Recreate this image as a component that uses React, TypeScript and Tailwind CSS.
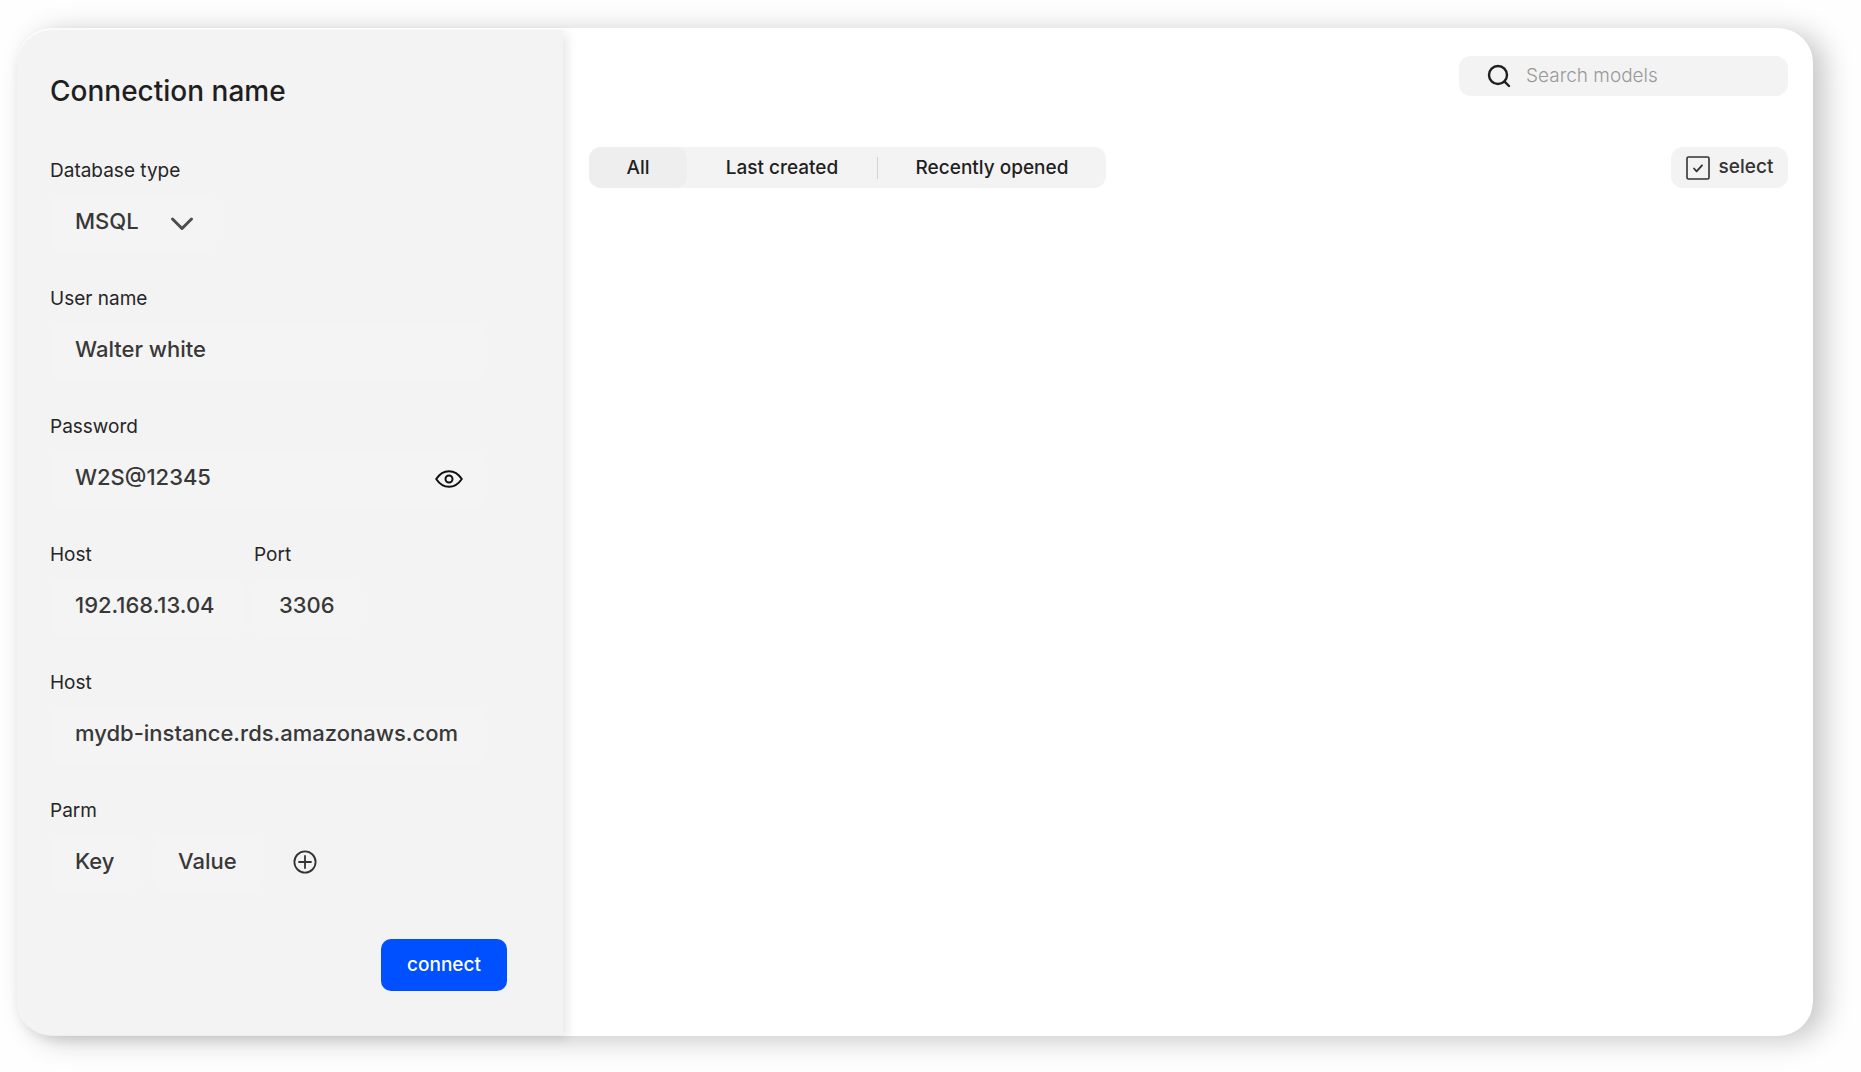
import { useState, type InputHTMLAttributes } from "react";

const labelClass = "text-[19px] leading-6 text-[#262626]";
const fieldClass =
  "h-14 min-w-0 rounded-xl bg-[#f4f4f4] px-[25px] pb-1 text-[22px] font-medium text-[#383838] placeholder:text-[#383838] placeholder:opacity-100 outline-none focus:ring-1 focus:ring-gray-300";

type FieldProps = InputHTMLAttributes<HTMLInputElement> & { id: string; label: string };

function Field({ id, label, className, ...rest }: FieldProps) {
  return (
    <div className="flex flex-col gap-3">
      <label htmlFor={id} className={labelClass}>
        {label}
      </label>
      <input id={id} className={`${fieldClass} ${className ?? ""}`} {...rest} />
    </div>
  );
}

function ChevronIcon() {
  return (
    <svg width="26" height="16" viewBox="0 0 26 16" fill="none" className="pointer-events-none absolute right-[22px] top-[21px]">
      <path d="M3.5 3 13 12.5 22.5 3" stroke="#4d4d4d" strokeWidth="3" strokeLinecap="round" strokeLinejoin="round" />
    </svg>
  );
}

function EyeIcon() {
  return (
    <svg width="28" height="18" viewBox="0 0 28 18" fill="none" stroke="#111111" strokeWidth="2" strokeLinejoin="round">
      <path d="M1.2 9C4.5 4 9 1.2 14 1.2S23.5 4 26.8 9C23.5 14 19 16.8 14 16.8S4.5 14 1.2 9Z" />
      <circle cx="14" cy="9" r="3.5" />
    </svg>
  );
}

function PlusCircleIcon() {
  return (
    <svg width="24" height="24" viewBox="0 0 24 24" fill="none" stroke="#333333" strokeWidth="1.8" strokeLinecap="round">
      <circle cx="12" cy="12" r="10.6" />
      <path d="M12 6v12M6 12h12" />
    </svg>
  );
}

function SearchIcon() {
  return (
    <svg width="24" height="24" viewBox="0 0 24 24" fill="none" stroke="#1f1f1f" strokeWidth="2.4" strokeLinecap="round">
      <circle cx="11" cy="11" r="9" />
      <path d="m17.6 17.6 4.4 4.4" />
    </svg>
  );
}

function Sidebar() {
  const [passwordShown, setPasswordShown] = useState(true);
  return (
    <form
      className="flex w-[546px] shrink-0 flex-col rounded-l-[35px] bg-[#f3f3f3] pb-11 pl-[33px] pr-14 pt-[41px] shadow-[4px_4px_12px_rgba(0,0,0,0.1)]"
      onSubmit={(e) => e.preventDefault()}
    >
      <h1 className="text-[28px] font-medium leading-10 text-[#1f1f1f]">Connection name</h1>

      <div className="mt-12 flex flex-col gap-9">
        <div className="flex flex-col items-start gap-3">
          <label htmlFor="db-type" className={labelClass}>
            Database type
          </label>
          <div className="relative w-[167px]">
            <select id="db-type" className={`${fieldClass} w-full appearance-none`}>
              <option>MSQL</option>
            </select>
            <ChevronIcon />
          </div>
        </div>

        <Field id="user" label="User name" defaultValue="Walter white" className="w-[437px]" />

        <div className="flex flex-col gap-3">
          <label htmlFor="password" className={labelClass}>
            Password
          </label>
          <div className="relative w-[437px]">
            <input
              id="password"
              type={passwordShown ? "text" : "password"}
              defaultValue="W2S@12345"
              className={`${fieldClass} w-full`}
            />
            <button
              type="button"
              aria-label="Toggle password visibility"
              className="absolute right-6 top-[19px]"
              onClick={() => setPasswordShown(!passwordShown)}
            >
              <EyeIcon />
            </button>
          </div>
        </div>

        <div className="flex gap-[11px]">
          <Field id="host-ip" label="Host" defaultValue="192.168.13.04" className="w-[193px]" />
          <Field id="port" label="Port" defaultValue="3306" className="w-[107px]" />
        </div>

        <Field id="host-name" label="Host" defaultValue="mydb-instance.rds.amazonaws.com" className="w-[437px]" />

        <fieldset>
          <legend className={`${labelClass} mb-3`}>Parm</legend>
          <div className="flex items-center">
            <input aria-label="Key" placeholder="Key" className={`${fieldClass} w-[89px]`} />
            <input aria-label="Value" placeholder="Value" className={`${fieldClass} ml-[14px] w-[111px]`} />
            <button type="button" aria-label="Add parameter" className="mb-0.5 ml-[29px]">
              <PlusCircleIcon />
            </button>
          </div>
        </fieldset>
      </div>

      <button type="submit" className="mt-auto h-[52px] w-[126px] self-end rounded-[10px] bg-[#0050ff] text-[19px] font-medium text-white">
        connect
      </button>
    </form>
  );
}

function Models() {
  const tab = "h-full rounded-xl font-medium";
  return (
    <main className="flex-1 pl-[26px] pr-[25px] pt-[26px]">
      <div className="flex justify-end">
        <div className="flex h-10 w-[329px] items-center gap-[15px] rounded-xl bg-[#f3f3f3] pl-7 pr-4">
          <SearchIcon />
          <input
            type="search"
            aria-label="Search models"
            placeholder="Search models"
            className="min-w-0 flex-1 bg-transparent text-[19px] font-light text-[#333333] outline-none placeholder:text-[#999999]"
          />
        </div>
      </div>

      <div className="mt-[51px] flex items-center justify-between text-[19px] text-[#1f1f1f]">
        <div className="flex h-[41px] items-center rounded-xl bg-[#f3f3f3]">
          <button type="button" className={`${tab} w-[98px] bg-[#eeeeee] pt-0.5`}>
            All
          </button>
          <button type="button" className={`${tab} w-[190px] pt-0.5`}>
            Last created
          </button>
          <span className="h-[22px] w-px bg-[#d4d4d4]" />
          <button type="button" className={`${tab} w-[228px] pt-0.5`}>
            Recently opened
          </button>
        </div>

        <button type="button" className="flex h-[41px] w-[117px] items-center justify-center gap-[9px] rounded-xl bg-[#f3f3f3] font-medium text-[#333333]">
          <svg width="24" height="24" viewBox="0 0 24 24" fill="none" stroke="#333333" strokeLinecap="round" strokeLinejoin="round">
            <rect x="1" y="1" width="22" height="22" rx="1.5" strokeWidth="1.6" />
            <path d="m8 12.5 2.6 2.8 5.4-6" strokeWidth="1.8" />
          </svg>
          select
        </button>
      </div>
    </main>
  );
}

export default function App() {
  return (
    <div className="flex min-h-screen bg-[#fefefe] pb-9 pl-[17px] pr-12 pt-7 font-['Inter',sans-serif]">
      <div className="flex flex-1 rounded-[35px] bg-white pb-px pt-0.5 shadow-[12px_4px_28px_rgba(0,0,0,0.22)]">
        <Sidebar />
        <Models />
      </div>
    </div>
  );
}
